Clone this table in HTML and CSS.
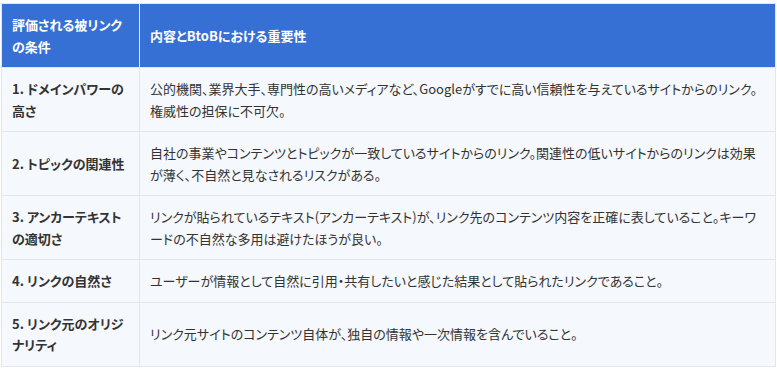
FILE: index.html
```html
<!DOCTYPE html>
<html lang="ja">
<head>
<meta charset="utf-8">
<link rel="stylesheet" href="styles.css">
</head>
<body>
<div class="wrap">
<table class="tbl">
<thead>
<tr><th class="c1">評価される被リンクの条件</th><th>内容とBtoBにおける重要性</th></tr>
</thead>
<tbody>
<tr><td class="c1">1. ドメインパワーの高さ</td><td>公的機関、業界大手、専門性の高いメディアなど、Googleがすでに高い信頼性を与えているサイトからのリンク。権威性の担保に不可欠。</td></tr>
<tr><td class="c1">2. トピックの関連性</td><td>自社の事業やコンテンツとトピックが一致しているサイトからのリンク。関連性の低いサイトからのリンクは効果が薄く、不自然と見なされるリスクがある。</td></tr>
<tr><td class="c1">3. アンカーテキストの適切さ</td><td>リンクが貼られているテキスト(アンカーテキスト)が、リンク先のコンテンツ内容を正確に表していること。キーワードの不自然な多用は避けたほうが良い。</td></tr>
<tr><td class="c1">4. リンクの自然さ</td><td>ユーザーが情報として自然に引用・共有したいと感じた結果として貼られたリンクであること。</td></tr>
<tr><td class="c1">5. リンク元のオリジナリティ</td><td>リンク元サイトのコンテンツ自体が、独自の情報や一次情報を含んでいること。</td></tr>
</tbody>
</table>
</div>
</body>
</html>
```

FILE: styles.css
```css
html, body {
  margin: 0;
  padding: 0;
  background: #ffffff;
}
.wrap {
  padding: 3px 0 0 1px;
}
.tbl {
  width: 775px;
  border-collapse: collapse;
  font-family: "Noto Sans CJK JP", "Noto Sans", sans-serif;
  font-size: 13px;
  line-height: 21.5px;
  color: #333333;
  font-feature-settings: "palt";
}
.tbl th,
.tbl td {
  border: 1px solid #e3e7ec;
  padding: 10px 10px;
  text-align: left;
  vertical-align: middle;
}
.tbl th {
  background: #3670d4;
  color: #ffffff;
  font-weight: 700;
  border-color: #e3e7ec;
}
.tbl thead th + th {
  border-left: 1px solid #dfe6f3;
}
.tbl td {
  background: #f5f8fc;
}
.tbl .c1 {
  width: 117px;
}
.tbl td.c1 {
  font-weight: 700;
}
```
